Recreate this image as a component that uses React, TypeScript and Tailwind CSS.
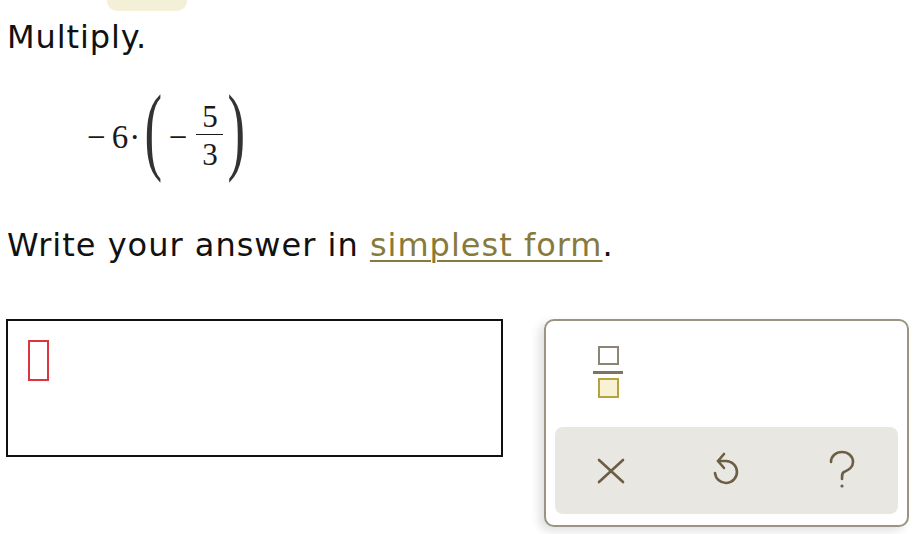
import React from 'react';

const sans = { fontFamily: '"DejaVu Sans", Verdana, sans-serif' };
const serif = { fontFamily: '"Liberation Serif", "Times New Roman", serif' };

const XIcon = () => (
    <svg width="28" height="26" viewBox="0 0 28 26" fill="none" stroke="#6b5e45" strokeWidth="2.6" strokeLinecap="round">
        <path d="M2 2 L26 24 M26 2 L2 24" />
    </svg>
);

const UndoIcon = () => (
    <svg width="30" height="34" viewBox="0 0 30 34" fill="none" stroke="#6b5e45" strokeWidth="2.6" strokeLinecap="round" strokeLinejoin="round">
        <path d="M7 9 H15 A11 11 0 1 1 4 21" />
        <path d="M13 2 L7 9 L13 16" />
    </svg>
);

const HelpIcon = () => (
    <svg width="28" height="40" viewBox="0 0 28 40" fill="none" stroke="#6b5e45" strokeWidth="2.6" strokeLinecap="round">
        <path d="M3 12 C3 6 8 2 14 2 C20 2 25 6 25 12 C25 18 20 20 16 22 C14 23 14 25 14 29" />
        <circle cx="14" cy="36" r="1.6" fill="#6b5e45" stroke="none" />
    </svg>
);

const Paren = ({ ch }: { ch: string }) => (
    <span className="inline-block text-[44px] leading-none scale-y-[2.2] scale-x-[1.2] text-[#333]">{ch}</span>
);

const App: React.FC = () => {
    return (
        <div className="w-[913px] h-[534px] bg-white text-[#111] overflow-hidden" style={sans}>
            <div className="ml-[107px] w-[80px] h-[11px] bg-[#f4f0d8] rounded-b-[10px]" />

            <div className="mt-[6px] ml-[7px] text-[32px] leading-[40px] tracking-[0.9px]">Multiply.</div>

            <div className="mt-[36px] h-[90px] pl-[87px] flex items-center text-[33px] text-[#1a1a1a]" style={serif}>
                <span>−</span>
                <span className="ml-[6px]">6</span>
                <span className="ml-[1px]">·</span>
                <span className="ml-[6px] -mt-[8px]"><Paren ch="(" /></span>
                <span className="ml-[8px]">−</span>
                <span className="ml-[9px] -mt-[4px] inline-flex flex-col items-center w-[27px] text-[31px] leading-[32px]">
                    <span>5</span>
                    <span className="block h-[1.5px] w-[27px] bg-[#1a1a1a] mt-[1px] mb-[4px]" />
                    <span>3</span>
                </span>
                <span className="ml-[6px] -mt-[8px]"><Paren ch=")" /></span>
            </div>

            <div className="mt-[42px] ml-[7px] text-[32px] leading-[40px] tracking-[1px]">
                Write your answer in{' '}
                <span className="text-[#877a3b] underline decoration-2 underline-offset-[4px]">simplest form</span>.
            </div>

            <div className="mt-[54px] flex items-start">
                <div className="ml-[6px] w-[497px] h-[138px] border-2 border-[#111]">
                    <div className="ml-[20px] mt-[19px] w-[21px] h-[41px] border-2 border-[#d9363e]" />
                </div>

                <div className="ml-[41px] w-[365px] h-[208px] border-2 border-[#9b9482] rounded-[10px] bg-white shadow-[-5px_4px_10px_rgba(0,0,0,0.12)]">
                    <div className="pt-[25px] pl-[47px]">
                        <div className="w-[30px] flex flex-col items-center">
                            <div className="w-[21px] h-[19px] border-2 border-[#8c8674]" />
                            <div className="mt-[6px] w-[30px] h-[3px] bg-[#7d7563]" />
                            <div className="mt-[4px] w-[21px] h-[20px] border-2 border-[#b9a23e] bg-[#f7f2d3]" />
                        </div>
                    </div>
                    <div className="mt-[29px] mx-[9px] h-[87px] rounded-[8px] bg-[#e9e7e2] grid grid-cols-3 items-center justify-items-center">
                        <div className="mr-[2px]"><XIcon /></div>
                        <div className="mb-[4px]"><UndoIcon /></div>
                        <div className="ml-[2px] mb-[2px]"><HelpIcon /></div>
                    </div>
                </div>
            </div>
        </div>
    );
};

export default App;
